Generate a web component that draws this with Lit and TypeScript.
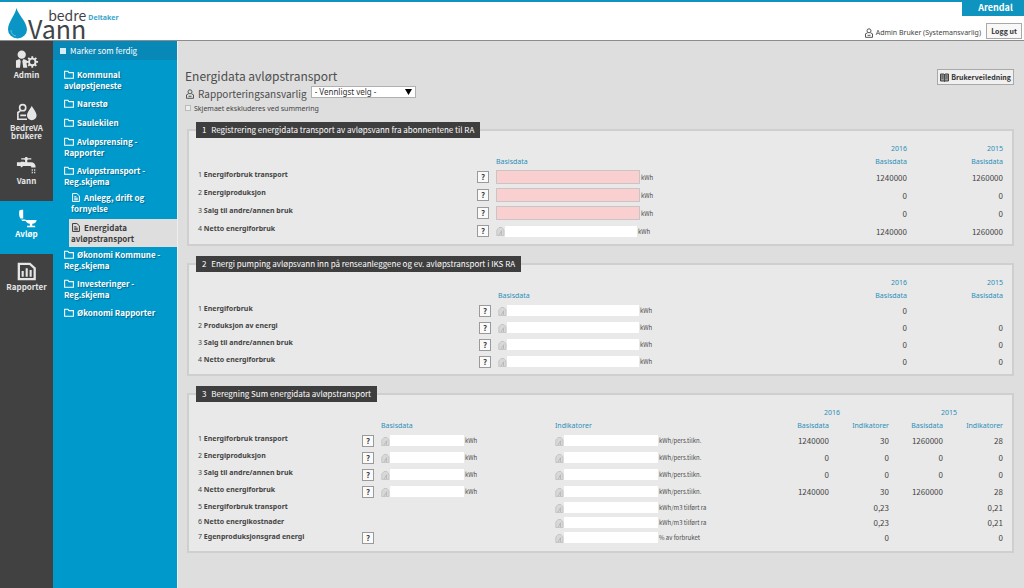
import { LitElement, html, css, svg, nothing } from "lit";
import { customElement, property } from "lit/decorators.js";

interface Entry {
  unit: string;
  required?: boolean;
}
interface Row {
  label: string;
  help: boolean;
  entries: (Entry | null)[];
  values: string[];
}
interface Section {
  title: string;
  kind: string;
  entryHeads: string[];
  yearHeads: string[];
  rows: Row[];
}

const kwh: Entry = { unit: "kWh" };
const must: Entry = { unit: "kWh", required: true };
const pers: Entry = { unit: "kWh/pers.tilkn." };
const perM3: Entry = { unit: "kWh/m3 tilført ra" };

const sections: Section[] = [
  {
    title: "Registrering energidata transport av avløpsvann fra abonnentene til RA",
    kind: "register",
    entryHeads: ["Basisdata"],
    yearHeads: ["Basisdata"],
    rows: [
      { label: "Energiforbruk transport", help: true, entries: [must], values: ["1240000", "1260000"] },
      { label: "Energiproduksjon", help: true, entries: [must], values: ["0", "0"] },
      { label: "Salg til andre/annen bruk", help: true, entries: [must], values: ["0", "0"] },
      { label: "Netto energiforbruk", help: true, entries: [kwh], values: ["1240000", "1260000"] },
    ],
  },
  {
    title: "Energi pumping avløpsvann inn på renseanleggene og ev. avløpstransport i IKS RA",
    kind: "pumping",
    entryHeads: ["Basisdata"],
    yearHeads: ["Basisdata"],
    rows: [
      { label: "Energiforbruk", help: true, entries: [kwh], values: ["0", ""] },
      { label: "Produksjon av energi", help: true, entries: [kwh], values: ["0", "0"] },
      { label: "Salg til andre/annen bruk", help: true, entries: [kwh], values: ["0", "0"] },
      { label: "Netto energiforbruk", help: true, entries: [kwh], values: ["0", "0"] },
    ],
  },
  {
    title: "Beregning Sum energidata avløpstransport",
    kind: "sum",
    entryHeads: ["Basisdata", "Indikatorer"],
    yearHeads: ["Basisdata", "Indikatorer"],
    rows: [
      { label: "Energiforbruk transport", help: true, entries: [kwh, pers], values: ["1240000", "30", "1260000", "28"] },
      { label: "Energiproduksjon", help: true, entries: [kwh, pers], values: ["0", "0", "0", "0"] },
      { label: "Salg til andre/annen bruk", help: true, entries: [kwh, pers], values: ["0", "0", "0", "0"] },
      { label: "Netto energiforbruk", help: true, entries: [kwh, pers], values: ["1240000", "30", "1260000", "28"] },
      { label: "Energiforbruk transport", help: false, entries: [null, perM3], values: ["", "0,23", "", "0,21"] },
      { label: "Netto energikostnader", help: false, entries: [null, perM3], values: ["", "0,23", "", "0,21"] },
      { label: "Egenproduksjonsgrad energi", help: true, entries: [null, { unit: "% av forbruket" }], values: ["", "0", "", "0"] },
    ],
  },
];

const person = svg`<circle cx="5" cy="2.800" r="2"/><path d="M3.500 4.800 1.500 5.800V9.300H8.500V5.800L6.500 4.800M3.500 7.300H6.500"/>`;

const railIcons = {
  admin: svg`
    <circle cx="7" cy="4.5" r="4.3"/>
    <path d="M1 10.5 4.5 9 6 11 5.2 18H1zM9 9l2.5 1 2 1.5-1.5 2 .8 4.5H8.6L7.6 11z"/>
    <circle cx="18" cy="12" r="3.4" fill="none" stroke="currentColor" stroke-width="2"/>
    <path d="M18 6v2.5M18 15.5V18M12 12h2.4M21.6 12H24M13.8 7.8l1.7 1.7M20.5 14.5l1.7 1.7M22.2 7.8l-1.7 1.7M15.5 14.5l-1.7 1.7" stroke="currentColor" stroke-width="2" fill="none"/>`,
  users: svg`
    <circle cx="8" cy="4.500" r="3.200" fill="none" stroke="currentColor" stroke-width="1.700"/>
    <path d="M5.500 8 3 9.500V16.500h9.500M5.500 12.500H11.500" fill="none" stroke="currentColor" stroke-width="1.700"/>
    <path d="M17.500 2.500c1.400 3.200 5 6.800 5 10.200a5 4.800 0 0 1-10 0c0-3.400 3.600-7 5-10.200z"/>`,
  tap: svg`
    <path d="M6.500 2h3.500L11 .7h1.500L13.500 2H17v1.300h-3.500L12.800 4v2h3.700c3.500 0 5 2 5 5.500h-4.500c0-1-.5-1.500-1.800-1.500H8.500L7 11.300H6V10H2V6.200h4V5.500h3L10.500 6V4l-.8-.700H6.500z"/>
    <path d="M18 13.500v5M20.500 13.500v5" stroke="currentColor" stroke-width="1.200" stroke-dasharray="1.500 1" fill="none"/>`,
  toilet: svg`
    <path d="M4.500 1.500C5 .7 6.500.5 8.500.5V9.500H5.500C4.300 7.500 4 4.500 4.500 1.500z"/>
    <path d="M6.500 10.500h4l1 .500h11c0 2.500-2 3.600-4.500 4V17h3v1.500h-8.500V17h3v-2c-2-.3-3.500-1-4.500-2.800H7.500z"/>`,
  report: svg`
    <path d="M4 1.500h11.500L20.500 6v11.500H4z" fill="none" stroke="currentColor" stroke-width="2.400"/>
    <path d="M8 9v6M12.200 6v9M16.300 8v7" stroke="currentColor" stroke-width="2.200" fill="none"/>`,
};

const folder = html`<svg class="glyph" viewBox="0 0 10 9" aria-hidden="true"><path d="M.6 1.200H3.800L5 2.600H9.400V8.200H.6z" fill="none" stroke="currentColor" stroke-width="1.100"/></svg>`;
const doc = html`<svg class="glyph" viewBox="0 0 10 10" aria-hidden="true"><path d="M1.200.6H6L8.800 3.200V9.400H1.200zM3 4.200H5.500M3 5.800H7M3 7.500H7" fill="none" stroke="currentColor" stroke-width="1.100"/></svg>`;

const fontStack = css`"Noto Sans CJK JP", "Noto Sans", sans-serif`;
const smallStack = css`"Noto Sans", sans-serif`;

@customElement("side-menu")
class SideMenu extends LitElement {
  static styles = css`
    :host { display: flex; flex: none; font-family: ${fontStack}; font-weight: 700; }
    a { color: inherit; text-decoration: none; }
    .rail { width: 53px; padding-top: 1px; background: #414141; color: #e6e6e6; }
    .area { box-sizing: border-box; height: 53px; padding-top: 8px; display: flex; flex-direction: column; align-items: center; gap: 2px; text-align: center; font-size: 8px; line-height: 8px; }
    .area svg { width: 24px; height: 19px; fill: currentColor; }
    .area.current { background: #0099cc; color: #fff; }
    .menu { width: 124px; background: #0099cc; color: #fff; font-size: 8px; line-height: 11px; }
    .mark { display: flex; align-items: center; gap: 4px; height: 19px; padding-left: 7px; background: #0888b6; font-weight: 400; font-size: 8px; }
    .mark input { appearance: none; width: 6px; height: 6px; margin: 0; background: #d8eef6; }
    ul { list-style: none; margin: 0; padding: 0; display: flex; flex-direction: column; }
    .top { padding: 9px 8px 0 11px; gap: 7px; }
    .sub { gap: 5px; margin: 5px -8px -5px 5px; }
    .entry { display: block; min-height: 12px; text-shadow: 1px 1px 1px #00668a; }
    .sub .entry { padding-left: 2px; }
    .sub .entry.current { background: #dedede; color: #3c3c3c; text-shadow: none; padding: 3px 0 3px 2px; }
    .glyph { width: 10px; height: 9px; vertical-align: -1px; margin-right: 3px; }
  `;

  private area(icon: unknown, label: unknown, current = false) {
    return html`<a href="#" class="area ${current ? "current" : ""}"><svg viewBox="0 0 25 19" aria-hidden="true">${icon}</svg><span>${label}</span></a>`;
  }
  private entry(icon: unknown, label: unknown, current = false) {
    return html`<a href="#" class="entry ${current ? "current" : ""}">${icon}${label}</a>`;
  }

  render() {
    return html`
      <nav class="rail" aria-label="Områder">
        ${this.area(railIcons.admin, "Admin")}
        ${this.area(railIcons.users, html`BedreVA<br />brukere`)}
        ${this.area(railIcons.tap, "Vann")}
        ${this.area(railIcons.toilet, "Avløp", true)}
        ${this.area(railIcons.report, "Rapporter")}
      </nav>
      <nav class="menu" aria-label="Skjemaer">
        <label class="mark"><input type="checkbox" />Marker som ferdig</label>
        <ul class="top">
          <li>${this.entry(folder, html`Kommunal<br />avløpstjeneste`)}</li>
          <li>${this.entry(folder, "Narestø")}</li>
          <li>${this.entry(folder, "Saulekilen")}</li>
          <li>${this.entry(folder, html`Avløpsrensing -<br />Rapporter`)}</li>
          <li>
            ${this.entry(folder, html`Avløpstransport -<br />Reg.skjema`)}
            <ul class="sub">
              <li>${this.entry(doc, html`Anlegg, drift og<br />fornyelse`)}</li>
              <li>${this.entry(doc, html`Energidata<br />avløpstransport`, true)}</li>
            </ul>
          </li>
          <li>${this.entry(folder, html`Økonomi Kommune -<br />Reg.skjema`)}</li>
          <li>${this.entry(folder, html`Investeringer -<br />Reg.skjema`)}</li>
          <li>${this.entry(folder, "Økonomi Rapporter")}</li>
        </ul>
      </nav>`;
  }
}

@customElement("data-section")
class DataSection extends LitElement {
  @property({ attribute: false }) section!: Section;
  @property({ type: Number }) number = 1;

  static styles = css`
    :host { display: block; font-family: ${fontStack}; font-size: 8px; color: #444; }
    fieldset { margin: 0; min-width: 0; border: 2px solid #cfcfcf; padding: 4px 9px; background: #e9e9e9; }
    fieldset.sum { padding-bottom: 6px; }
    legend { margin: 0 0 0 -2px; padding: 0 6px; background: #3e3e3e; color: #fff; height: 16px; line-height: 15px; font-size: 8px; }
    legend span { margin-right: 3px; }
    table { width: 100%; table-layout: fixed; border-collapse: collapse; }
    th, td { padding: 0; font-weight: 400; text-align: left; line-height: 13px; white-space: nowrap; }
    thead th { height: 13px; color: #2a8fb8; font-family: ${smallStack}; font-size: 7px; }
    tbody tr { height: 17px; }
    .register tbody tr { height: 18px; }
    .sum tbody tr:nth-child(n + 5) { height: 15px; }
    tbody th { vertical-align: top; font-family: ${smallStack}; font-size: 7px; }
    tbody label { font-weight: 700; }
    td { vertical-align: middle; }
    .num { text-align: right; }
    .year { text-align: right; }
    .sum .year { text-align: center; padding-left: 6px; }
    .c-help { width: 19px; }
    .register .c-entry { width: 315px; }
    .pumping .c-entry { width: 313px; }
    .c-value { width: 96px; }
    .sum .c-entry { width: 174px; }
    .sum .c-entry.last { width: 214px; }
    .sum .c-value { width: 60px; }
    .sum .c-value.base { width: 54px; }
    button { display: block; box-sizing: border-box; width: 12px; height: 12px; padding: 0; border: 1px solid #9a9a9a; background: #fafafa; color: #444; font: 700 8px/10px ${fontStack}; text-align: center; }
    .field { display: flex; align-items: center; font-size: 6px; height: 14px; color: #4a4a4a; }
    .field svg { width: 9px; height: 10px; flex: none; }
    input { box-sizing: border-box; width: 132px; height: 11px; margin: 0 1px 0 0; padding: 0 2px; border: 0; background: #fff; font: 8px/10px ${fontStack}; }
    input.required { width: 144px; height: 14px; border: 1px solid #c9c5c5; background: #f9cfd0; }
    .sum input { width: 74px; }
    .sum .last input { width: 94px; }
  `;

  private field(entry: Entry | null, index: number, row: number, label: string) {
    const last = index > 0 ? "last" : "";
    if (!entry) return html`<td class=${last}></td>`;
    return html`<td class=${last}>
      <div class="field">
        ${entry.required
          ? html`<input class="required" id="f${row}-${index}" />`
          : html`<svg viewBox="0 0 9 10" aria-hidden="true"><path d="M.8 4V9.500H8V4L6 1.500H3L.8 4z" fill="#d8d8d8" stroke="#c0c0c0" stroke-width=".8"/><path d="M3 9 5.800 4.500M5.500 5v4" stroke="#b4b4b4" stroke-width=".8" fill="none"/></svg><input id="f${row}-${index}" readonly aria-label=${index > 0 ? label : nothing} />`}
        <span>${entry.unit}</span>
      </div>
    </td>`;
  }

  render() {
    const s = this.section;
    const span = s.yearHeads.length;
    return html`
      <fieldset class=${s.kind}>
        <legend><span>${this.number}</span> ${s.title}</legend>
        <table>
          <colgroup>
            <col />
            <col class="c-help" />
            ${s.entryHeads.map((_, i) => html`<col class="c-entry ${i ? "last" : ""}" />`)}
            ${s.yearHeads.map(() => html`<col class="c-value" />`)}
            ${s.yearHeads.map((_, i) => html`<col class="c-value ${i ? "" : "base"}" />`)}
          </colgroup>
          <thead>
            <tr>
              <th colspan=${2 + s.entryHeads.length}></th>
              <th class="year" colspan=${span}>2016</th>
              <th class="year" colspan=${span}>2015</th>
            </tr>
            <tr>
              <th></th>
              <th></th>
              ${s.entryHeads.map((h) => html`<th>${h}</th>`)}
              ${[...s.yearHeads, ...s.yearHeads].map((h) => html`<th class="num">${h}</th>`)}
            </tr>
          </thead>
          <tbody>
            ${s.rows.map((r, i) => html`
              <tr>
                <th scope="row">${i + 1} <label for="f${i}-${r.entries[0] ? 0 : 1}">${r.label}</label></th>
                <td>${r.help ? html`<button type="button" aria-label="Hjelp: ${r.label}">?</button>` : nothing}</td>
                ${r.entries.map((e, j) => this.field(e, j, i, r.label))}
                ${r.values.map((v) => html`<td class="num">${v}</td>`)}
              </tr>`)}
          </tbody>
        </table>
      </fieldset>`;
  }
}

@customElement("app-root")
class AppRoot extends LitElement {
  static styles = css`
    :host { display: flex; flex-direction: column; min-height: 100vh; font-family: ${fontStack}; font-size: 8px; color: #444; background: #dedede; }
    header { display: flex; justify-content: space-between; box-sizing: border-box; height: 41px; border-top: 2px solid #0f93bf; border-bottom: 1px solid #8c8c8c; background: #fff; }
    .logo { display: flex; padding-left: 7px; color: #3f4448; text-decoration: none; }
    .drop { width: 21px; height: 31px; margin-top: 6px; fill: #0b95c4; }
    .name { display: grid; grid-template-columns: auto auto; grid-template-rows: 15px 18px; column-gap: 2px; padding-top: 2px; }
    .bedre { justify-self: end; font-size: 14px; line-height: 22px; }
    .vann { font-size: 25px; line-height: 18px; }
    .role { font-size: 7px; font-family: ${smallStack}; font-weight: 700; line-height: 27px; color: #3aa5cc; }
    .account { display: flex; flex-direction: column; align-items: flex-end; gap: 7px; }
    .tenant { box-sizing: border-box; width: 62px; height: 14px; padding-left: 5px; background: #0f93bf; color: #fff; font-size: 9px; font-weight: 700; line-height: 11px; text-align: center; }
    .session { display: flex; align-items: center; gap: 5px; padding-right: 2px; }
    .user { display: flex; align-items: center; gap: 2px; padding-top: 4px; font-size: 7px; font-family: ${smallStack}; line-height: 12px; }
    .person { width: 10px; height: 10px; fill: none; stroke: #555; stroke-width: 1; flex: none; }
    button { display: flex; align-items: center; justify-content: center; gap: 2px; box-sizing: border-box; height: 16px; padding: 0 2px; border: 1px solid #a9a9a9; background: #f0f0f0; color: #333; font: 700 7px/12px ${fontStack}; }
    .logout { width: 36px; background: #f8f8f8; }
    .guide svg { width: 9px; height: 9px; }
    .body { display: flex; flex: 1; }
    main { flex: 1; min-width: 0; padding: 26px 10px 10px 7px; border-left: 1px solid #eee; }
    .intro { display: flex; justify-content: space-between; align-items: flex-start; }
    .intro .guide { margin-top: 2px; }
    h1 { margin: 0; font-size: 12px; line-height: 18px; font-weight: 400; color: #4d4d4d; }
    .owner { display: flex; align-items: flex-start; height: 17px; }
    .owner .person { margin: 4px 3px 0 0; }
    .owner label { font-size: 10px; line-height: 17px; margin-right: 4px; color: #4d4d4d; }
    select { appearance: none; box-sizing: border-box; width: 105px; height: 12px; padding: 0 3px; border: 1px solid #b0b0b0; border-radius: 0; background: #fff; color: #333; font: 8px/10px ${smallStack}; }
    .picker { display: grid; align-items: center; padding-top: 1px; }
    .picker > * { grid-area: 1 / 1; }
    .arrow { width: 7px; height: 6px; justify-self: end; margin-right: 4px; pointer-events: none; }
    .exclude { display: flex; align-items: center; gap: 3px; font-family: ${smallStack}; line-height: 14px; font-size: 7px; }
    .exclude input { appearance: none; box-sizing: border-box; width: 6px; height: 6px; margin: 0 0 3px; border: 1px solid #bbb; background: #eee; }
    .sections { display: flex; flex-direction: column; gap: 10px; padding: 6px 0 0 2px; }
  `;

  render() {
    return html`
      <header>
        <a class="logo" href="#">
          <svg class="drop" viewBox="0 0 21 31" aria-hidden="true"><path d="M9.500 0C11 6.500 20 14 20 21.500a9.500 9 0 0 1-19 0C1 14 8 7.500 9.500 0z"/><path d="M4 22c0 3.500 2 5.500 5 6" fill="none" stroke="#5fc0e0" stroke-width="1"/></svg>
          <span class="name"><span class="bedre">bedre</span><span class="role">Deltaker</span><span class="vann">Vann</span></span>
        </a>
        <div class="account">
          <div class="tenant">Arendal</div>
          <div class="session">
            <span class="user"><svg class="person" viewBox="0 0 10 10" aria-hidden="true">${person}</svg>Admin Bruker (Systemansvarlig)</span>
            <button class="logout" type="button">Logg ut</button>
          </div>
        </div>
      </header>
      <div class="body">
        <side-menu></side-menu>
        <main>
          <div class="intro">
            <div>
              <h1>Energidata avløpstransport</h1>
              <div class="owner">
                <svg class="person" viewBox="0 0 10 10" aria-hidden="true">${person}</svg>
                <label for="owner">Rapporteringsansvarlig</label>
                <span class="picker">
                  <select id="owner"><option>- Vennligst velg -</option></select>
                  <svg class="arrow" viewBox="0 0 7 6" aria-hidden="true"><path d="M0 0h7L3.500 6z"/></svg>
                </span>
              </div>
              <label class="exclude"><input type="checkbox" />Skjemaet ekskluderes ved summering</label>
            </div>
            <button class="guide" type="button">
              <svg viewBox="0 0 9 9" aria-hidden="true"><path d="M.5 1h3.500l.5.500.5-.5h3.500v7H5l-.5.5-.5-.5H.5z" fill="#999" stroke="#444"/><path d="M4.500 1v7.500M1.500 3h2M1.500 5h2M5.500 3h2M5.500 5h2" stroke="#333" stroke-width=".8"/></svg>
              Brukerveiledning
            </button>
          </div>
          <div class="sections">
            ${sections.map((s, i) => html`<data-section .section=${s} .number=${i + 1}></data-section>`)}
          </div>
        </main>
      </div>`;
  }
}
